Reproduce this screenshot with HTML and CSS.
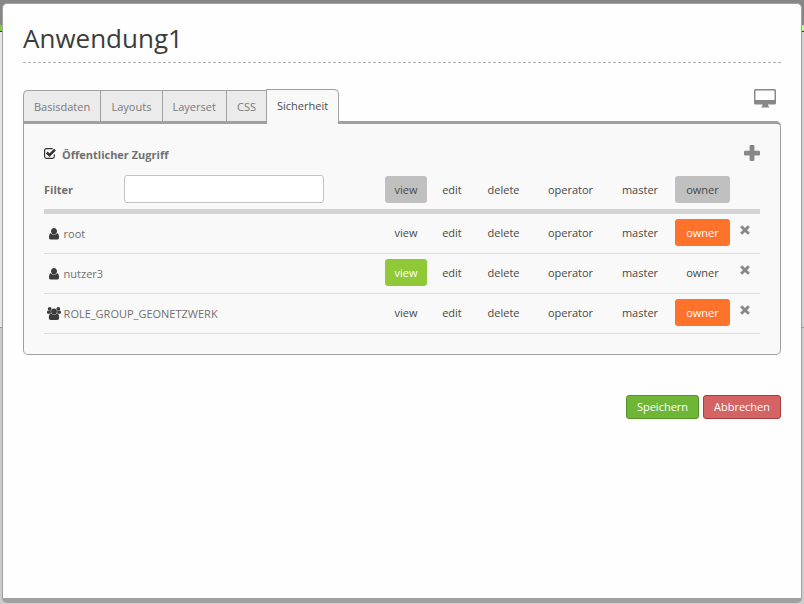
FILE: index.html
```html
<!DOCTYPE html>
<html lang="de">
<head>
<meta charset="utf-8">
<title>Anwendung1</title>
<link rel="stylesheet" href="styles.css">
</head>
<body>
<svg class="defs" aria-hidden="true">
  <symbol id="user" viewBox="0 0 10 12"><path d="M5 0C6.700 0 8 1.300 8 3.200S6.700 6.500 5 6.500 2 5 2 3.200 3.300 0 5 0zM2 5.300C3.600 7.300 6.400 7.300 8 5.300 9.400 5.400 10 7.200 10 9.300 10 10.900 9.300 11.600 8.200 11.600H1.800C.7 11.600 0 10.900 0 9.300 0 7.200.6 5.400 2 5.300z"/></symbol>
  <symbol id="group" viewBox="0 0 14 13"><circle cx="2.700" cy="1.900" r="1.900"/><circle cx="11.300" cy="1.900" r="1.900"/><path d="M1 3.400C2 4.200 3 4.200 3.800 3.600V6.800H1.400C.5 6.800 0 6.300 0 5.500 0 4.400.3 3.400 1 3.400zM13 3.400C12 4.200 11 4.200 10.200 3.600V6.800H12.600C13.500 6.800 14 6.300 14 5.500 14 4.400 13.700 3.400 13 3.400z"/><circle cx="7" cy="4.500" r="2.900"/><path d="M4.200 6.500C6 8.100 8 8.100 9.800 6.500 11.600 6.600 12.200 8.500 12.200 10.500 12.200 12.200 11.500 13 10 13H4C2.500 13 1.800 12.200 1.800 10.500 1.800 8.500 2.400 6.600 4.200 6.500z"/></symbol>
  <symbol id="remove" viewBox="0 0 10 10"><path d="M2.200 2.200l5.600 5.600M7.800 2.200L2.200 7.800" fill="none" stroke="currentColor" stroke-width="2.900" stroke-linecap="square"/></symbol>
</svg>
<div class="backdrop"><div class="bar"></div><div class="upper"></div><div class="lower"></div></div>
<main class="dialog">
  <h1>Anwendung1</h1>
  <div class="tabs">
    <a class="tab first">Basisdaten</a><a class="tab layouts">Layouts</a><a class="tab layerset">Layerset</a><a class="tab css">CSS</a><a class="tab active">Sicherheit</a>
    <svg class="monitor" viewBox="0 0 22 19"><path fill-rule="evenodd" d="M1.500 0h19Q22 0 22 1.500v12.600q0 1.500-1.500 1.500H14v1.200l1 .4V18.500H7.500v-1.300l1-.4v-1.200H1.500Q0 15.600 0 14.100V1.500Q0 0 1.500 0zM2 1.400Q1.500 1.400 1.500 1.900V11H20.500V1.900Q20.500 1.400 20 1.400z"/></svg>
  </div>
  <section class="panel">
    <div class="public">
      <svg class="check" viewBox="0 0 12 11"><path d="M10.300 6.400V8.500q0 1.800-1.800 1.800H2.400Q.6 10.300.6 8.500V2.500Q.6.700 2.400.7H8.700" fill="none" stroke="currentColor" stroke-width="1.200"/><path d="M2.800 4.500L5.500 7.200 11 1.700" fill="none" stroke="currentColor" stroke-width="2.500"/></svg>
      <span>Öffentlicher Zugriff</span>
      <svg class="plus" viewBox="0 0 16 16"><path d="M6.600 0h2.800q1 0 1 1v4.700H15q1 0 1 1v2.700q0 1-1 1h-4.600V15q0 1-1 1H6.600q-1 0-1-1v-4.600H1q-1 0-1-1V6.700q0-1 1-1h4.600V1q0-1 1-1z"/></svg>
    </div>
    <div class="row head">
      <div class="name"><label for="filter">Filter</label><input id="filter" type="text"></div>
      <span class="tag gray">view</span><span class="tag">edit</span><span class="tag">delete</span><span class="tag">operator</span><span class="tag">master</span><span class="tag owner gray">owner</span>
    </div>
    <div class="row">
      <div class="name"><svg class="user"><use href="#user"/></svg>root</div>
      <span class="tag">view</span><span class="tag">edit</span><span class="tag">delete</span><span class="tag">operator</span><span class="tag">master</span><span class="tag owner orange">owner</span><svg class="remove"><use href="#remove"/></svg>
    </div>
    <div class="row">
      <div class="name"><svg class="user"><use href="#user"/></svg>nutzer3</div>
      <span class="tag green">view</span><span class="tag">edit</span><span class="tag">delete</span><span class="tag">operator</span><span class="tag">master</span><span class="tag owner">owner</span><svg class="remove"><use href="#remove"/></svg>
    </div>
    <div class="row">
      <div class="name"><svg class="group"><use href="#group"/></svg>ROLE_GROUP_GEONETZWERK</div>
      <span class="tag">view</span><span class="tag">edit</span><span class="tag">delete</span><span class="tag">operator</span><span class="tag">master</span><span class="tag owner orange">owner</span><svg class="remove"><use href="#remove"/></svg>
    </div>
  </section>
  <div class="actions"><button class="save">Speichern</button><button class="cancel">Abbrechen</button></div>
</main>
</body>
</html>
```
FILE: styles.css
```css
* { box-sizing: border-box; }
body {
  margin: 0;
  height: 604px;
  overflow: hidden;
  padding: 3px 2px 1px;
  font: 11px/16px "Open Sans", "Noto Sans", sans-serif;
  color: #707070;
}
.defs { position: absolute; width: 0; height: 0; }
.backdrop { position: absolute; inset: 0; z-index: -1; background: #ccc; }
.bar { height: 32px; background: #878787; border-bottom: 1px solid #333; padding-top: 25px; }
.bar::after { content: ""; display: block; height: 6px; background: linear-gradient(90deg, #82d038 50%, #bdff80 50%); }
.upper { height: 296px; background: linear-gradient(90deg, #e6e6e6 50%, #d2d2d2 50%); border-bottom: 1px solid #999; }
.dialog {
  height: 600px;
  background: #fefefe;
  border: 1px solid #a0a0a0;
  border-bottom-width: 5px;
  border-radius: 5px;
  padding: 0 20px;
}
h1 {
  margin: 0;
  height: 59px;
  padding-top: 16px;
  font-size: 26px;
  line-height: 36px;
  font-weight: 400;
  color: #3c3c3c;
  background: repeating-linear-gradient(90deg, #b0b0b0 0 3px, transparent 3px 5px) left bottom / 100% 1px no-repeat;
}
.tabs { display: flex; align-items: flex-end; height: 61px; position: relative; z-index: 1; margin-bottom: -3px; }
.tab {
  height: 34px;
  border: 1px solid #a0a0a0;
  border-right: 0;
  border-bottom: 3px solid #a0a0a0;
  background: #ebebeb;
  padding: 8px 0 0 10px;
  color: #7a7a7a;
}
.first { width: 77px; border-radius: 5px 0 0 0; }
.layouts { width: 62px; padding-left: 10.5px; }
.layerset { width: 64px; padding-left: 9.5px; }
.css { width: 40px; }
.tab.active {
  width: 73px;
  height: 35px;
  border-right: 1px solid #a0a0a0;
  border-bottom: 0;
  border-radius: 0 5px 0 0;
  background: #f9f9f9;
  color: #4c4c4c;
}
.monitor { width: 22px; height: 19px; margin: 0 5px 16px auto; fill: #888; }
.panel {
  height: 234px;
  border: 1px solid #a0a0a0;
  border-top-width: 3px;
  border-radius: 0 5px 5px 5px;
  background: #f9f9f9;
  padding: 20px 20px 0;
}
.public { display: flex; height: 25px; font-weight: 700; }
.check { width: 12px; height: 11px; margin: 4px 6px 0 0; color: #333; }
.public span { padding-top: 3px; }
.plus { width: 16px; height: 16px; margin: 1px 0 0 auto; fill: #888; }
.row {
  display: grid;
  grid-template-columns: 341px 42px 50px 53px 81px 58px 61px 30px;
  height: 40px;
  padding-top: 5px;
  border-bottom: 1px solid #ddd;
}
.head { height: 45px; padding-top: 7px; border-bottom: 5px solid #d3d3d3; }
.name { display: flex; align-items: center; height: 29px; }
.head .name { height: 28px; margin-top: -1px; font-weight: 700; }
label { width: 80px; padding-top: 2px; }
input { width: 200px; height: 28px; border: 1px solid #c3c3c3; border-radius: 3px; background: #fff; }
.user { width: 10px; height: 12px; margin: 0 4.600px 0 5px; fill: #3c3c3c; }
.group { width: 14px; height: 13px; margin: 0 2.600px 0 3px; fill: #3c3c3c; }
.tag { height: 27px; line-height: 27px; text-align: center; color: #484848; border-radius: 3px; }
.owner { margin-left: 6px; }
.gray { background: #c0c0c0; }
.green { background: #8fc937; color: #fff; }
.orange { background: #ff722c; color: #fff; }
.remove { width: 10px; height: 10px; margin: 6px auto 0; color: #888; }
.actions { display: flex; justify-content: flex-end; gap: 4px; margin-top: 40px; }
button { height: 24px; padding: 0; border-radius: 3px; font: inherit; color: #fff; }
.save { width: 73px; background: #6fb536; border: 1px solid #549127; }
.cancel { width: 78px; background: #d46464; border: 1px solid #a83c40; }
```
